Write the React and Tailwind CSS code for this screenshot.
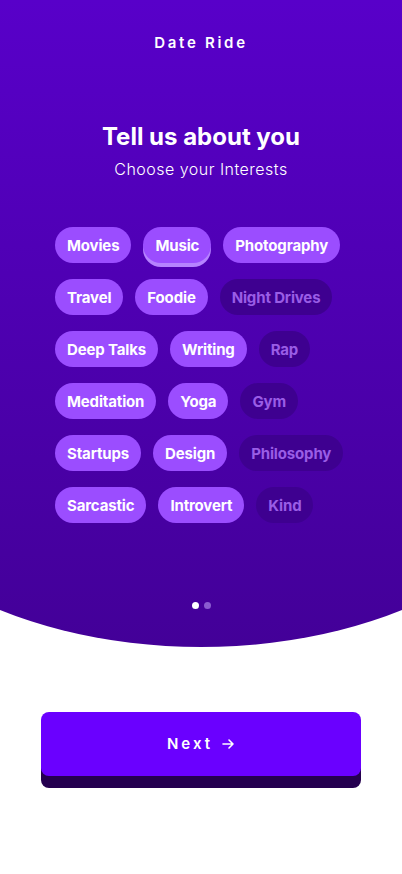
import React from 'react';

const interests = [
  ['Movies', 'on'],
  ['Music', 'picked'],
  ['Photography', 'on'],
  ['Travel', 'on'],
  ['Foodie', 'on'],
  ['Night Drives', 'off'],
  ['Deep Talks', 'on'],
  ['Writing', 'on'],
  ['Rap', 'off'],
  ['Meditation', 'on'],
  ['Yoga', 'on'],
  ['Gym', 'off'],
  ['Startups', 'on'],
  ['Design', 'on'],
  ['Philosophy', 'off'],
  ['Sarcastic', 'on'],
  ['Introvert', 'on'],
  ['Kind', 'off'],
];

const rows = [];
for (let i = 0; i < interests.length; i += 3) rows.push(interests.slice(i, i + 3));

function Chip({ label, state }) {
  const styles = {
    on: 'bg-[#9b4dff] text-white',
    picked: 'bg-[#9b4dff] text-white shadow-[0_4px_0_#b683ff]',
    off: 'bg-[#3e0090] text-[#9a5de6]',
  };
  return (
    <span className={`h-9 px-3 pt-[2px] rounded-full flex items-center text-[15px] font-bold tracking-[-0.01em] ${styles[state]}`}>
      {label}
    </span>
  );
}

export default function App() {
  return (
    <div className="w-[402px] h-[874px] bg-white overflow-hidden flex flex-col items-center font-['Inter',sans-serif]">
      {/* Purple hero with curved bottom */}
      <div className="w-[724px] h-[647px] shrink-0 bg-gradient-to-b from-[#5800c9] to-[#430098] rounded-b-[50%_220px] flex flex-col items-center">
        <div className="w-[402px] flex flex-col items-center pt-[34px]">
          <h1 className="text-[15px] leading-[18px] font-semibold text-white tracking-[0.18em]">Date Ride</h1>

          <h2 className="mt-[70px] text-[24px] leading-[30px] font-bold text-white">Tell us about you</h2>
          <p className="mt-[7px] text-[16px] leading-[20px] font-light text-white tracking-[0.03em]">Choose your Interests</p>

          <div className="mt-[48px] w-full pl-[55px] flex flex-col gap-4">
            {rows.map((row, i) => (
              <div key={i} className="flex gap-3">
                {row.map(([label, state]) => (
                  <Chip key={label} label={label} state={state} />
                ))}
              </div>
            ))}
          </div>

          {/* Pager dots */}
          <div className="mt-[79px] flex gap-[5px]">
            <span className="w-[7px] h-[7px] rounded-full bg-white" />
            <span className="w-[7px] h-[7px] rounded-full bg-[#8a5cd0]" />
          </div>
        </div>
      </div>

      {/* Next button */}
      <button className="mt-[65px] w-[320px] h-16 rounded-lg bg-[#6a00ff] shadow-[0_12px_0_#25004f] flex items-center justify-center gap-2 text-white text-[15px] font-semibold tracking-[0.2em]">
        Next
        <svg width="14" height="14" viewBox="0 0 14 14" fill="none" stroke="currentColor" strokeWidth="1.6" strokeLinecap="round" strokeLinejoin="round">
          <path d="M2 7h10M8 3l4 4-4 4" />
        </svg>
      </button>
    </div>
  );
}
